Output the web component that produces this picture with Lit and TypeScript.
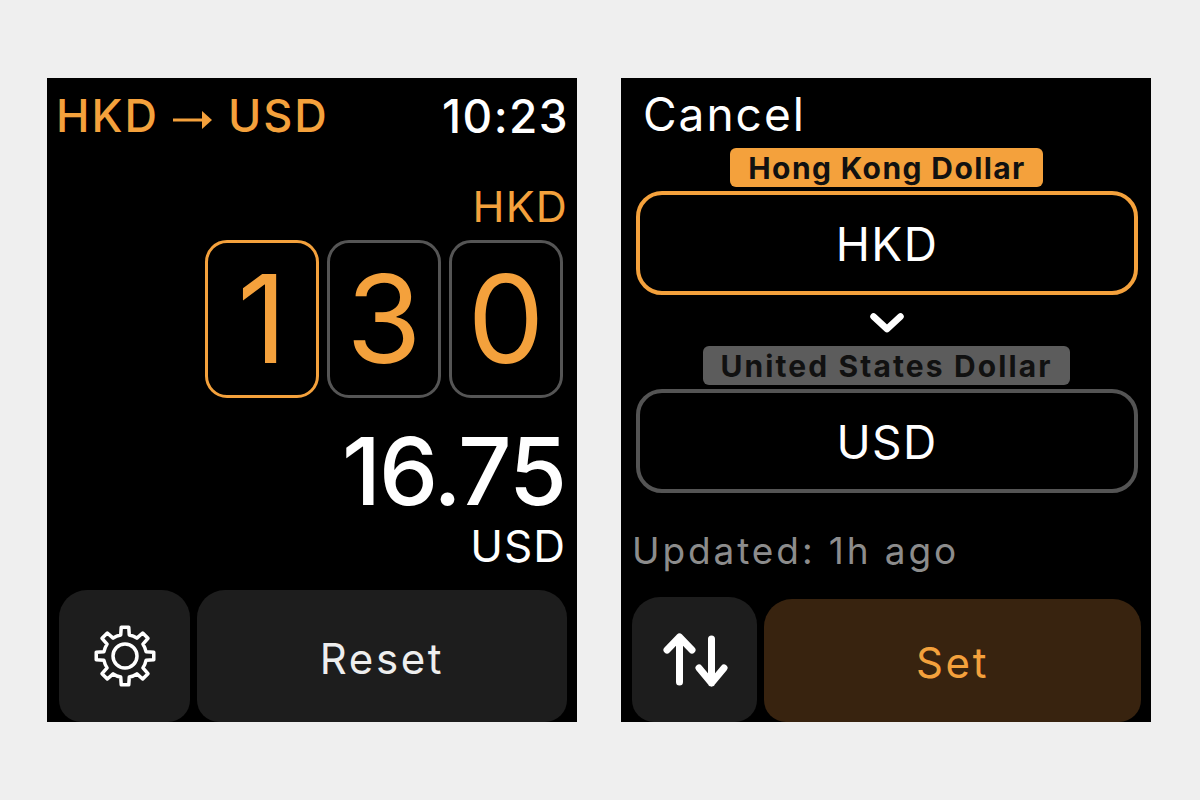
import { LitElement, html, css, svg } from "lit";
import { customElement } from "lit/decorators.js";

function gearPath(cx: number, cy: number): string {
  const pt = (r: number, a: number) => `${(cx + r * Math.cos(a)).toFixed(2)} ${(cy + r * Math.sin(a)).toFixed(2)}`;
  const body = 21.5;
  const tip = 29;
  let d = "";
  for (let i = 0; i < 8; i++) {
    const a = (i * Math.PI) / 4 - Math.PI / 2;
    const base = i === 0 ? "M" : `A${body} ${body} 0 0 1 `;
    d += `${base}${pt(body, a - 0.2)}L${pt(tip, a - 0.13)}L${pt(tip, a + 0.13)}L${pt(body, a + 0.2)}`;
  }
  const a0 = -Math.PI / 2 - 0.2;
  return `${d}A${body} ${body} 0 0 1 ${pt(body, a0)}Z`;
}

@customElement("app-root")
export class AppRoot extends LitElement {
  static styles = css`
    :host { display: block; width: 1200px; height: 800px; background: #efefef; font-family: Inter, "Liberation Sans", sans-serif; }
    .page { display: flex; gap: 44px; padding: 78px 0 0 47px; }
    .watch { width: 530px; height: 644px; background: #000; display: flex; flex-direction: column; box-sizing: border-box; overflow: hidden; }
    .orange { color: #f4a13c; }
    .white { color: #fff; }

    .left { padding: 12px 10px 0 12px; }
    .head { display: flex; justify-content: space-between; align-items: center; height: 52px; margin-left: -3px; font-size: 45px; line-height: 52px; letter-spacing: 2px; font-weight: 500; }
    .clock { font-size: 46px; letter-spacing: 1.4px; margin-right: -2px; }
    .arrow { display: inline-block; vertical-align: middle; margin: 0 15px 0 14px; }
    .r { text-align: right; }
    .hkd { font-size: 43px; line-height: 50px; margin-top: 39px; letter-spacing: 1.2px; margin-right: -1px; }
    .digits { display: flex; justify-content: flex-end; gap: 8px; margin-top: 9px; padding-right: 4px; }
    .digit { width: 114px; height: 158px; box-sizing: border-box; border: 3.5px solid #555; border-radius: 22px; display: flex; align-items: center; justify-content: center; color: #f4a13c; font-size: 122px; font-weight: 400; line-height: 1; }
    .digit.on { border-color: #f4a13c; }
    .amount { font-size: 94px; line-height: 100px; font-weight: 500; color: #fff; margin-top: 23px; letter-spacing: -2px; margin-right: 2px; }
    .usd { font-size: 44px; line-height: 50px; color: #fff; margin-top: 0; letter-spacing: 1px; margin-right: 1px; }
    .btns { display: flex; gap: 7px; margin-top: auto; }
    .btn { background: #1d1d1d; border-radius: 28px 28px 22px 22px; display: flex; align-items: center; justify-content: center; color: #fff; font-size: 42px; letter-spacing: 2.6px; box-sizing: border-box; }
    .gear { width: 131px; height: 132px; flex: none; }
    .reset { width: 370px; height: 132px; flex: none; color: #eee; padding-top: 4px; }

    .right { padding: 8px 10px 0 11px; }
    .cancel { font-size: 46px; line-height: 56px; color: #fff; padding-left: 11px; letter-spacing: 2px; }
    .pill { align-self: center; height: 39px; box-sizing: border-box; border-radius: 6px; display: flex; align-items: center; font-size: 30px; font-weight: 700; color: #111; white-space: nowrap; }
    .pill.a { background: #f4a13c; margin-top: 6px; padding: 0 17px 0 18px; letter-spacing: 1.4px; }
    .pill.b { background: #5c5c5c; margin-top: 5px; padding: 0 18px; letter-spacing: 2.1px; }
    .box { width: 502px; height: 104px; margin-left: 4px; box-sizing: border-box; border: 4px solid #545454; border-radius: 26px; display: flex; align-items: center; justify-content: center; color: #fff; font-size: 46px; letter-spacing: 1.4px; margin-top: 4px; padding-top: 2px; }
    .box.on { border-color: #f4a13c; }
    .chev { align-self: center; height: 20px; margin-top: 18px; margin-bottom: 8px; display: block; }
    .updated { color: #8c8c8c; font-size: 37px; line-height: 44px; margin-top: 36px; letter-spacing: 2.9px; }
    .btns2 { display: flex; gap: 7px; align-items: flex-end; margin-top: auto; }
    .swap { width: 125px; height: 125px; flex: none; }
    .set { width: 377px; height: 123px; flex: none; background: #38230f; color: #f4a13c; padding-top: 4px; }
  `;

  render() {
    return html`<div class="page">
      <section class="watch left">
        <div class="head">
          <span class="orange">HKD<svg class="arrow" width="40" height="24" viewBox="0 0 40 24"><path d="M0 12H32" stroke="#f4a13c" stroke-width="3" fill="none"/><path d="M29 3L39 12L29 21Z" fill="#f4a13c"/></svg>USD</span>
          <span class="white clock">10:23</span>
        </div>
        <div class="r hkd orange">HKD</div>
        <div class="digits">
          <div class="digit on">1</div><div class="digit">3</div><div class="digit">0</div>
        </div>
        <div class="r amount">16.75</div>
        <div class="r usd">USD</div>
        <div class="btns">
          <div class="btn gear">
            <svg width="64" height="64" viewBox="0 0 64 64" fill="none" stroke="#fff" stroke-width="3.5" stroke-linejoin="round">
              <circle cx="32" cy="32" r="12"/>
              ${svg`<path d=${gearPath(32, 32)}></path>`}
            </svg>
          </div>
          <div class="btn reset">Reset</div>
        </div>
      </section>

      <section class="watch right">
        <div class="cancel">Cancel</div>
        <div class="pill a">Hong Kong Dollar</div>
        <div class="box on">HKD</div>
        <svg class="chev" width="34" height="20" viewBox="0 0 34 20" fill="none" stroke="#fff" stroke-width="6.5" stroke-linecap="round" stroke-linejoin="round"><path d="M3.5 3.5L17 16L30.5 3.5"/></svg>
        <div class="pill b">United States Dollar</div>
        <div class="box">USD</div>
        <div class="updated">Updated: 1h ago</div>
        <div class="btns2">
          <div class="btn swap">
            <svg width="70" height="60" viewBox="0 0 70 60" fill="none" stroke="#fff" stroke-width="7" stroke-linecap="round" stroke-linejoin="round">
              <path d="M19.5 52V7M7 20L19.5 7L32 20"/>
              <path d="M51.5 9V53M39 38L51.5 53L64 38"/>
            </svg>
          </div>
          <div class="btn set">Set</div>
        </div>
      </section>
    </div>`;
  }
}
